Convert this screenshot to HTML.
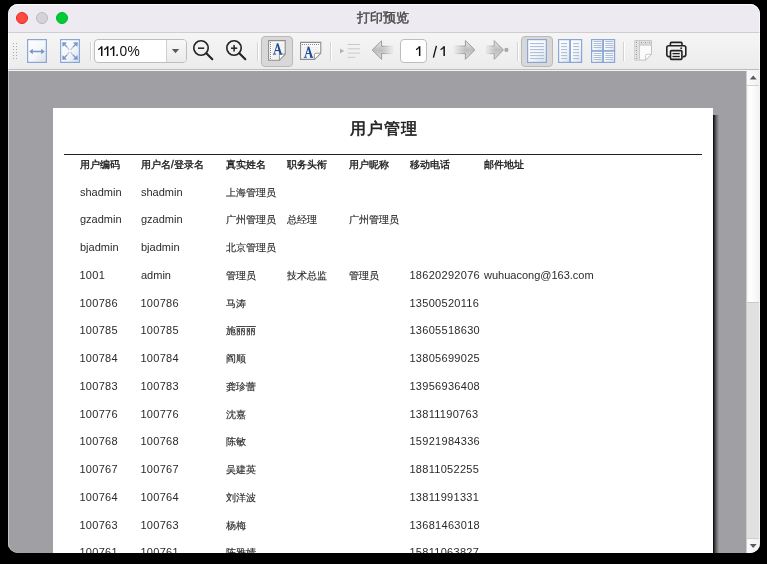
<!DOCTYPE html>
<html><head><meta charset="utf-8">
<style>
*{margin:0;padding:0;box-sizing:border-box}
html,body{width:767px;height:564px;background:#000;overflow:hidden;font-family:"Liberation Sans",sans-serif}
#win{position:absolute;left:8px;top:4px;width:752px;height:549px;border-radius:10px;overflow:hidden;background:#a09fa4;will-change:transform}
#title{position:absolute;left:0;top:0;width:752px;height:29px;background:#edeaf1;border-bottom:1px solid #cfcdd1}
#title .t{position:absolute;left:349px;top:5px;font-size:13px;font-weight:normal;-webkit-text-stroke:0.45px #4b4b4b;color:#4b4b4b;letter-spacing:0}
.light{position:absolute;top:8px;width:12px;height:12px;border-radius:50%}
#tb{position:absolute;left:0;top:29px;width:752px;height:37px;background:linear-gradient(#f5f5f5,#ececec);border-bottom:1px solid #bdbdbd;border-left:1px solid #fff}
#tbl{position:absolute;left:0;top:66px;width:752px;height:1px;background:#f4f4f4}
#content{position:absolute;left:0;top:67px;width:738px;height:482px;background:#a09fa4;overflow:hidden}
#page{position:absolute;left:45px;top:37px;width:660px;height:600px;background:#fff}
#shadow{position:absolute;left:705px;top:44px;width:6px;height:600px;background:linear-gradient(90deg,#000,#5a595c 45%,#a09fa4)}
#sb{position:absolute;left:738px;top:67px;width:14px;height:482px;background:#e2e2e2}
.row{position:absolute;left:0;height:0}
.h{position:absolute;top:0;line-height:14px;font-size:10px;font-weight:normal;-webkit-text-stroke:0.35px #1a1a1a;color:#1a1a1a;white-space:nowrap}
.c{position:absolute;top:0;font-size:11px;line-height:14px;color:#2a2a2a;white-space:nowrap}
.n{letter-spacing:0.3px;margin-left:-0.6px}
.z{position:absolute;top:1px;font-size:10px;line-height:14px;color:#2a2a2a;-webkit-text-stroke:0.15px #2a2a2a;white-space:nowrap}
</style></head><body>
<div id="win">
  <div id="title">
    <div class="light" style="left:8px;background:#ff4b43;border:1px solid #ef2418"></div>
    <div class="light" style="left:28px;background:#d5d3d9;border:1px solid #bab9be"></div>
    <div class="light" style="left:48px;background:#02cc33;border:1px solid #01b52b"></div>
    <div class="t">打印预览</div>
  </div>
  <div id="tb"></div>
  <div id="tbl"></div>
  <div id="content">
    <div style="position:absolute;left:0;top:0;width:1px;height:482px;background:#a8a7ac"></div>
    <div id="shadow"></div>
    <div id="page">
      <div style="position:absolute;left:0;width:660px;top:11px;text-align:center;font-size:16px;letter-spacing:1px;text-indent:1px;font-weight:normal;-webkit-text-stroke:0.6px #222;color:#222">用户管理</div>
      <div style="position:absolute;left:11px;top:46px;width:638px;height:1px;background:#222"></div>
<div class="row" style="top:50px"><div class="h" style="left:27px">用户编码</div><div class="h" style="left:88px">用户名/登录名</div><div class="h" style="left:173px">真实姓名</div><div class="h" style="left:234px">职务头衔</div><div class="h" style="left:296px">用户昵称</div><div class="h" style="left:357px">移动电话</div><div class="h" style="left:431px">邮件地址</div></div>
<div class="row" style="top:76.70px"><div class="c" style="left:27px">shadmin</div><div class="c" style="left:88px">shadmin</div><div class="z" style="left:173px">上海管理员</div></div>
<div class="row" style="top:104.44px"><div class="c" style="left:27px">gzadmin</div><div class="c" style="left:88px">gzadmin</div><div class="z" style="left:173px">广州管理员</div><div class="z" style="left:234px">总经理</div><div class="z" style="left:296px">广州管理员</div></div>
<div class="row" style="top:132.18px"><div class="c" style="left:27px">bjadmin</div><div class="c" style="left:88px">bjadmin</div><div class="z" style="left:173px">北京管理员</div></div>
<div class="row" style="top:159.92px"><div class="c n" style="left:27px">1001</div><div class="c" style="left:88px">admin</div><div class="z" style="left:173px">管理员</div><div class="z" style="left:234px">技术总监</div><div class="z" style="left:296px">管理员</div><div class="c n" style="left:357px">18620292076</div><div class="c" style="left:431px">wuhuacong@163.com</div></div>
<div class="row" style="top:187.66px"><div class="c n" style="left:27px">100786</div><div class="c n" style="left:88px">100786</div><div class="z" style="left:173px">马涛</div><div class="c n" style="left:357px">13500520116</div></div>
<div class="row" style="top:215.40px"><div class="c n" style="left:27px">100785</div><div class="c n" style="left:88px">100785</div><div class="z" style="left:173px">施丽丽</div><div class="c n" style="left:357px">13605518630</div></div>
<div class="row" style="top:243.14px"><div class="c n" style="left:27px">100784</div><div class="c n" style="left:88px">100784</div><div class="z" style="left:173px">阎顺</div><div class="c n" style="left:357px">13805699025</div></div>
<div class="row" style="top:270.88px"><div class="c n" style="left:27px">100783</div><div class="c n" style="left:88px">100783</div><div class="z" style="left:173px">龚珍蕾</div><div class="c n" style="left:357px">13956936408</div></div>
<div class="row" style="top:298.62px"><div class="c n" style="left:27px">100776</div><div class="c n" style="left:88px">100776</div><div class="z" style="left:173px">沈嘉</div><div class="c n" style="left:357px">13811190763</div></div>
<div class="row" style="top:326.36px"><div class="c n" style="left:27px">100768</div><div class="c n" style="left:88px">100768</div><div class="z" style="left:173px">陈敏</div><div class="c n" style="left:357px">15921984336</div></div>
<div class="row" style="top:354.10px"><div class="c n" style="left:27px">100767</div><div class="c n" style="left:88px">100767</div><div class="z" style="left:173px">吴建英</div><div class="c n" style="left:357px">18811052255</div></div>
<div class="row" style="top:381.84px"><div class="c n" style="left:27px">100764</div><div class="c n" style="left:88px">100764</div><div class="z" style="left:173px">刘洋波</div><div class="c n" style="left:357px">13811991331</div></div>
<div class="row" style="top:409.58px"><div class="c n" style="left:27px">100763</div><div class="c n" style="left:88px">100763</div><div class="z" style="left:173px">杨梅</div><div class="c n" style="left:357px">13681463018</div></div>
<div class="row" style="top:437.32px"><div class="c n" style="left:27px">100761</div><div class="c n" style="left:88px">100761</div><div class="z" style="left:173px">陈雅婧</div><div class="c n" style="left:357px">15811063827</div></div>

    </div>
  </div>
  <div id="sb">
    <div style="position:absolute;left:0;top:0;width:1px;height:482px;background:#cdcdcd"></div>
    <div style="position:absolute;left:1px;top:0;width:12px;height:14px;background:linear-gradient(90deg,#fbfbfb,#f1f1f1)"></div>
    <svg width="13" height="14" style="position:absolute;left:1px;top:0"><path d="M2.8 8.6 L6.2 4.6 L9.7 8.6 Z" fill="#5a5a5a"/></svg>
    <div style="position:absolute;left:1px;top:14px;width:12px;height:1px;background:#d2d2d2"></div>
    <div style="position:absolute;left:1px;top:15px;width:12px;height:216px;background:linear-gradient(90deg,#f6f6f6,#ffffff 30%,#f3f3f3)"></div>
    <div style="position:absolute;left:1px;top:231px;width:12px;height:1px;background:#c9c9c9"></div>
    <div style="position:absolute;left:1px;top:232px;width:12px;height:235px;background:#e1e1e1"></div>
    <div style="position:absolute;left:1px;top:467px;width:12px;height:1px;background:#cfcfcf"></div>
    <div style="position:absolute;left:1px;top:468px;width:12px;height:14px;background:linear-gradient(90deg,#fbfbfb,#f1f1f1)"></div>
    <svg width="13" height="14" style="position:absolute;left:1px;top:468px"><path d="M2.8 5.1 L9.7 5.1 L6.2 8.9 Z" fill="#5a5a5a"/></svg>
  </div>
</div>
<svg id="tbsvg" width="767" height="72" viewBox="0 0 767 72" style="position:absolute;left:0;top:0">
<defs>
<linearGradient id="pg" x1="0" y1="0" x2="1" y2="1"><stop offset="0" stop-color="#ffffff"/><stop offset="0.55" stop-color="#f4f6f9"/><stop offset="1" stop-color="#d9dee8"/></linearGradient>
<linearGradient id="btn" x1="0" y1="0" x2="0" y2="1"><stop offset="0" stop-color="#f8f8f8"/><stop offset="1" stop-color="#ebebeb"/></linearGradient>
<linearGradient id="arrL" x1="0" y1="0" x2="1" y2="0"><stop offset="0" stop-color="#c4c4c4"/><stop offset="0.55" stop-color="#cfcfcf"/><stop offset="1" stop-color="#f0f0f0" stop-opacity="0"/></linearGradient>
<linearGradient id="arrR" x1="1" y1="0" x2="0" y2="0"><stop offset="0" stop-color="#c4c4c4"/><stop offset="0.55" stop-color="#cfcfcf"/><stop offset="1" stop-color="#f0f0f0" stop-opacity="0"/></linearGradient>
<linearGradient id="shaftV" x1="0" y1="0" x2="0" y2="1"><stop offset="0" stop-color="#e6e6e6"/><stop offset="0.5" stop-color="#c2c2c2"/><stop offset="1" stop-color="#dadada"/></linearGradient>

<linearGradient id="mL" x1="0" y1="0" x2="1" y2="0"><stop offset="0" stop-color="#fff"/><stop offset="0.5" stop-color="#fff"/><stop offset="1" stop-color="#000"/></linearGradient>
<linearGradient id="mR" x1="1" y1="0" x2="0" y2="0"><stop offset="0" stop-color="#fff"/><stop offset="0.5" stop-color="#fff"/><stop offset="1" stop-color="#000"/></linearGradient>
<linearGradient id="af" x1="0" y1="0" x2="0" y2="1"><stop offset="0" stop-color="#ececec"/><stop offset="0.5" stop-color="#bdbdbd"/><stop offset="1" stop-color="#dcdcdc"/></linearGradient>
<mask id="mkB" maskUnits="userSpaceOnUse" x="370" y="38" width="24" height="24"><rect x="370" y="38" width="24" height="24" fill="url(#mL)"/></mask>
<mask id="mkF" maskUnits="userSpaceOnUse" x="453" y="38" width="24" height="24"><rect x="453" y="38" width="24" height="24" fill="url(#mR)"/></mask>
<mask id="mkL" maskUnits="userSpaceOnUse" x="485" y="38" width="20" height="24"><rect x="485" y="38" width="20" height="24" fill="url(#mR)"/></mask>
</defs>
<!-- grip -->
<g fill="#a8a8a8">
<rect x="13" y="43" width="1" height="1"/><rect x="16" y="43" width="1" height="1"/>
<rect x="13" y="46" width="1" height="1"/><rect x="16" y="46" width="1" height="1"/>
<rect x="13" y="49" width="1" height="1"/><rect x="16" y="49" width="1" height="1"/>
<rect x="13" y="52" width="1" height="1"/><rect x="16" y="52" width="1" height="1"/>
<rect x="13" y="55" width="1" height="1"/><rect x="16" y="55" width="1" height="1"/>
<rect x="13" y="58" width="1" height="1"/><rect x="16" y="58" width="1" height="1"/>
</g>
<!-- fit width -->
<rect x="27.6" y="39.6" width="18.8" height="22.8" fill="url(#pg)" stroke="#8aa7d6" stroke-width="1.2"/>
<line x1="31" y1="51.5" x2="43" y2="51.5" stroke="#7896c8" stroke-width="1.5"/>
<path d="M29.2 51.5 L32.8 48.8 L32.8 54.2 Z M44.8 51.5 L41.2 48.8 L41.2 54.2 Z" fill="#7896c8"/>
<!-- fit page -->
<rect x="60.6" y="39.6" width="18.8" height="22.8" fill="url(#pg)" stroke="#8aa7d6" stroke-width="1.2"/>
<g stroke="#7b98c9" stroke-width="1.3">
<line x1="64" y1="44" x2="67" y2="47"/><line x1="76" y1="44" x2="73" y2="47"/>
<line x1="64" y1="58" x2="67" y2="55"/><line x1="76" y1="58" x2="73" y2="55"/>
</g>
<g stroke="#9fb4d8" stroke-width="1.1" stroke-opacity="0.8">
<line x1="67" y1="47" x2="69.3" y2="49.8"/><line x1="73" y1="47" x2="70.7" y2="49.8"/>
<line x1="67" y1="55" x2="69.3" y2="52.2"/><line x1="73" y1="55" x2="70.7" y2="52.2"/>
</g>
<path d="M62.2 42.2 L67 42.6 L62.6 47 Z M77.8 42.2 L73 42.6 L77.4 47 Z M62.2 59.8 L67 59.4 L62.6 55 Z M77.8 59.8 L73 59.4 L77.4 55 Z" fill="#7896c8"/>
<!-- separators -->
<g fill="#d3d3d3"><rect x="90" y="42" width="1" height="19"/><rect x="257" y="42" width="1" height="19"/><rect x="330" y="42" width="1" height="19"/><rect x="517" y="42" width="1" height="19"/><rect x="623" y="42" width="1" height="19"/></g><g fill="#ffffff"><rect x="91" y="42" width="1" height="19"/><rect x="258" y="42" width="1" height="19"/><rect x="331" y="42" width="1" height="19"/><rect x="518" y="42" width="1" height="19"/><rect x="624" y="42" width="1" height="19"/></g>
<!-- combo -->
<rect x="94.5" y="39.5" width="92" height="23" rx="3.5" fill="#ffffff" stroke="#bdbdbd"/>
<path d="M166.5 40 H183 A3 3 0 0 1 186 43 V59 A3 3 0 0 1 183 62 H166.5 Z" fill="url(#btn)"/>
<line x1="166.5" y1="40" x2="166.5" y2="62" stroke="#cfcfcf"/>
<path d="M171.8 49 H179.2 L175.5 53.2 Z" fill="#5a5a5a"/>
<path transform="translate(0 0)" d="M101 46.3 H102.5 V56 H101 V48.3 Q99.8 49.7 98.1 50.3 V48.9 Q100.2 48 101 46.3 Z" fill="#111"/><path transform="translate(5.95 0)" d="M101 46.3 H102.5 V56 H101 V48.3 Q99.8 49.7 98.1 50.3 V48.9 Q100.2 48 101 46.3 Z" fill="#111"/><path transform="translate(11.9 0)" d="M101 46.3 H102.5 V56 H101 V48.3 Q99.8 49.7 98.1 50.3 V48.9 Q100.2 48 101 46.3 Z" fill="#111"/><rect x="116.3" y="54.4" width="1.6" height="1.6" fill="#111"/><text x="119.4 127.4" y="56" font-family="Liberation Sans" font-size="13.8" fill="#111">0%</text>
<!-- zoom out -->
<g stroke="#222" fill="none">
<circle cx="201" cy="48" r="7.2" stroke-width="1.6"/>
<line x1="198" y1="48.2" x2="204.2" y2="48.2" stroke-width="1.5"/>
<line x1="206.3" y1="53.3" x2="212.3" y2="59.2" stroke-width="2.1" stroke-linecap="round"/>
<circle cx="234" cy="48" r="7.2" stroke-width="1.6"/>
<line x1="231" y1="48.2" x2="237.2" y2="48.2" stroke-width="1.5"/>
<line x1="234.1" y1="45" x2="234.1" y2="51.4" stroke-width="1.5"/>
<line x1="239.3" y1="53.3" x2="245.3" y2="59.2" stroke-width="2.1" stroke-linecap="round"/>
</g>

<!-- pressed button portrait -->
<rect x="261.5" y="36.5" width="31" height="30" rx="3.5" fill="#d8d8d8" stroke="#b9b9b9"/>
<!-- portrait icon -->
<path d="M268.6 40.6 H285.2 V54 L279.4 60.2 H268.6 Z" fill="#fbfbfb" stroke="#8c8c8c" stroke-width="1.1"/>
<path d="M279.4 60.2 V55.5 Q279.4 54 281 54 H285.2 Z" fill="#ffffff" stroke="#8c8c8c" stroke-width="0.9"/>
<g fill="#e3e6e0"><rect x="272" y="43.6" width="12" height="0.7"/><rect x="272" y="45.6" width="12" height="0.7"/><rect x="272" y="47.6" width="12" height="0.7"/><rect x="272" y="49.6" width="12" height="0.7"/><rect x="272" y="51.6" width="12" height="0.7"/><rect x="272" y="53.6" width="7" height="0.7"/><rect x="272" y="55.6" width="7" height="0.7"/><rect x="272" y="57.6" width="7" height="0.7"/></g>
<g fill="#8a8a8a"><rect x="270" y="42" width="1" height="1"/><rect x="270" y="44" width="1" height="1"/><rect x="270" y="46" width="1" height="1"/><rect x="270" y="48" width="1" height="1"/><rect x="270" y="50" width="1" height="1"/><rect x="270" y="52" width="1" height="1"/><rect x="270" y="54" width="1" height="1"/><rect x="270" y="56" width="1" height="1"/><rect x="270" y="58" width="1" height="1"/></g>
<path d="M276.6 43.2 H278.3 L281.7 53.7 H279.4 Z M276.9 43.6 L277.5 45.1 L274.7 53.7 H273.9 Z M275.4 49.9 H279.8 L280.1 50.9 H275.1 Z" fill="#1c4a98"/><rect x="272.9" y="53.6" width="3.1" height="1" fill="#1c4a98"/><rect x="278.9" y="53.6" width="3.5" height="1" fill="#1c4a98"/>
<!-- landscape icon -->
<path d="M300.6 42.4 H320.8 V53.2 L314.4 59.4 H300.6 Z" fill="#fbfbfb" stroke="#8c8c8c" stroke-width="1.1"/>
<path d="M314.4 59.4 V54.8 Q314.4 53.2 316 53.2 H320.8 Z" fill="#ffffff" stroke="#8c8c8c" stroke-width="0.9"/>
<g fill="#e3e6e0"><rect x="302.5" y="47.5" width="16" height="0.7"/><rect x="302.5" y="49.5" width="16" height="0.7"/><rect x="302.5" y="51.5" width="16" height="0.7"/><rect x="302.5" y="53.5" width="11" height="0.7"/><rect x="302.5" y="55.5" width="11" height="0.7"/></g>
<g fill="#8a8a8a"><rect x="302" y="44" width="1" height="1"/><rect x="304" y="44" width="1" height="1"/><rect x="306" y="44" width="1" height="1"/><rect x="308" y="44" width="1" height="1"/><rect x="310" y="44" width="1" height="1"/><rect x="312" y="44" width="1" height="1"/><rect x="314" y="44" width="1" height="1"/><rect x="316" y="44" width="1" height="1"/><rect x="318" y="44" width="1" height="1"/></g>
<g transform="translate(30.9 3.2)"><path d="M276.6 43.2 H278.3 L281.7 53.7 H279.4 Z M276.9 43.6 L277.5 45.1 L274.7 53.7 H273.9 Z M275.4 49.9 H279.8 L280.1 50.9 H275.1 Z" fill="#1c4a98"/><rect x="272.9" y="53.6" width="3.1" height="1" fill="#1c4a98"/><rect x="278.9" y="53.6" width="3.5" height="1" fill="#1c4a98"/></g>
<!-- contents (disabled) -->
<path d="M340 48.6 L344.2 51.1 L340 53.6 Z" fill="#b4b4b4"/>
<g fill="#cacaca"><rect x="347.7" y="44" width="12.2" height="1"/><rect x="347.7" y="48.3" width="12.2" height="1"/><rect x="347.7" y="52.6" width="12.2" height="1"/><rect x="347.7" y="56.8" width="7.5" height="1"/></g>
<!-- back arrow -->
<g mask="url(#mkB)"><path d="M393 46.3 H381.6 V40.8 L372.2 50 L381.6 59.3 V53.6 H393 Z" fill="url(#af)" stroke="#9a9a9a" stroke-width="1"/></g>
<!-- page field -->
<rect x="400.5" y="39.5" width="26" height="23" rx="3.5" fill="#ffffff" stroke="#bdbdbd"/>
<path transform="translate(317.9 0)" d="M101 46.3 H102.5 V56 H101 V48.3 Q99.8 49.7 98.1 50.3 V48.9 Q100.2 48 101 46.3 Z" fill="#111"/>
<path d="M436.4 45.8 L433.4 57.6" stroke="#111" stroke-width="1.35"/><path transform="translate(342.4 0)" d="M101 46.3 H102.5 V56 H101 V48.3 Q99.8 49.7 98.1 50.3 V48.9 Q100.2 48 101 46.3 Z" fill="#111"/>
<!-- forward arrow -->
<g mask="url(#mkF)"><path d="M454 46.1 H465.4 V40.6 L474.8 49.9 L465.4 59.3 V53.6 H454 Z" fill="url(#af)" stroke="#9a9a9a" stroke-width="1"/></g>
<!-- last arrow -->
<g mask="url(#mkL)"><path d="M486.5 46.1 H494.2 V40.6 L503.4 49.9 L494.2 59.3 V53.6 H486.5 Z" fill="url(#af)" stroke="#9a9a9a" stroke-width="1"/></g>
<circle cx="506.4" cy="49.9" r="2.1" fill="#a8a8a8"/>
<!-- pressed button single -->
<rect x="521.5" y="36.5" width="31" height="30" rx="3.5" fill="#d8d8d8" stroke="#b9b9b9"/>
<rect x="527.6" y="39.6" width="18.8" height="22.8" fill="url(#pg)" stroke="#8aa7d6" stroke-width="1.2"/>
<g fill="#adc0de"><rect x="530" y="43" width="14" height="1.1"/><rect x="530" y="46" width="14" height="1.1"/><rect x="530" y="49" width="14" height="1.1"/><rect x="530" y="52" width="14" height="1.1"/><rect x="530" y="55" width="14" height="1.1"/><rect x="530" y="58" width="14" height="1.1"/></g>
<!-- facing -->
<rect x="558.6" y="39.6" width="11.2" height="22.8" fill="url(#pg)" stroke="#8aa7d6" stroke-width="1.2"/>
<rect x="570.4" y="39.6" width="11.2" height="22.8" fill="url(#pg)" stroke="#8aa7d6" stroke-width="1.2"/>
<g fill="#adc0de"><rect x="561" y="43" width="6" height="1.1"/><rect x="561" y="46" width="6" height="1.1"/><rect x="561" y="49" width="6" height="1.1"/><rect x="561" y="52" width="6" height="1.1"/><rect x="561" y="55" width="6" height="1.1"/><rect x="561" y="58" width="6" height="1.1"/>
<rect x="573" y="43" width="6" height="1.1"/><rect x="573" y="46" width="6" height="1.1"/><rect x="573" y="49" width="6" height="1.1"/><rect x="573" y="52" width="6" height="1.1"/><rect x="573" y="55" width="6" height="1.1"/><rect x="573" y="58" width="6" height="1.1"/></g>
<!-- grid -->
<rect x="591.6" y="39.6" width="11.2" height="11.2" fill="url(#pg)" stroke="#8aa7d6" stroke-width="1.2"/>
<rect x="603.4" y="39.6" width="11.2" height="11.2" fill="url(#pg)" stroke="#8aa7d6" stroke-width="1.2"/>
<rect x="591.6" y="51.2" width="11.2" height="11.2" fill="url(#pg)" stroke="#8aa7d6" stroke-width="1.2"/>
<rect x="603.4" y="51.2" width="11.2" height="11.2" fill="url(#pg)" stroke="#8aa7d6" stroke-width="1.2"/>
<g fill="#aebfdc"><rect x="593.5" y="41" width="8" height="1"/><rect x="593.5" y="43" width="8" height="1"/><rect x="593.5" y="45" width="8" height="1"/><rect x="593.5" y="47" width="8" height="1"/>
<rect x="605.3" y="41" width="8" height="1"/><rect x="605.3" y="43" width="8" height="1"/><rect x="605.3" y="45" width="8" height="1"/><rect x="605.3" y="47" width="8" height="1"/>
<rect x="593.5" y="53" width="8" height="1"/><rect x="593.5" y="55" width="8" height="1"/><rect x="593.5" y="57" width="8" height="1"/><rect x="593.5" y="59" width="8" height="1"/>
<rect x="605.3" y="53" width="8" height="1"/><rect x="605.3" y="55" width="8" height="1"/><rect x="605.3" y="57" width="8" height="1"/><rect x="605.3" y="59" width="8" height="1"/></g>
<!-- page setup -->
<path d="M634.8 40.6 H651.5 V54.3 L645.5 60.1 H634.8 Z" fill="#fbfbfb" stroke="#c2c2c2" stroke-width="1"/>
<rect x="635.3" y="41.1" width="3.8" height="18.5" fill="#e2e2e2"/>
<rect x="639.1" y="41.1" width="11.9" height="4.2" fill="#e0e0e0"/>
<rect x="639.1" y="44.6" width="11.9" height="0.9" fill="#c4c4c4"/>
<rect x="639" y="41.1" width="0.9" height="18.5" fill="#c4c4c4"/>
<path d="M645.5 60.1 V55.6 Q645.5 54.3 646.8 54.3 H651.5 Z" fill="#ffffff" stroke="#bcbcbc" stroke-width="0.8"/>
<g fill="#8c8c8c"><rect x="635.8" y="42" width="1.2" height="0.9"/><rect x="635.8" y="46" width="1.2" height="0.9"/><rect x="635.8" y="50" width="1.2" height="0.9"/><rect x="635.8" y="54" width="1.2" height="0.9"/><rect x="635.8" y="58" width="1.2" height="0.9"/>
<rect x="641" y="42" width="0.9" height="1.2"/><rect x="645" y="42" width="0.9" height="1.2"/><rect x="649" y="42" width="0.9" height="1.2"/></g>
<g fill="#b5b5b5"><rect x="636" y="44" width="0.9" height="0.8"/><rect x="636" y="48" width="0.9" height="0.8"/><rect x="636" y="52" width="0.9" height="0.8"/><rect x="636" y="56" width="0.9" height="0.8"/><rect x="643" y="42.2" width="0.8" height="0.9"/><rect x="647" y="42.2" width="0.8" height="0.9"/></g>
<!-- printer -->
<g fill="none" stroke="#222" stroke-width="1.6">
<path d="M670.4 45.2 V43.4 Q670.4 42.4 671.4 42.4 H681 Q682 42.4 682 43.4 V45.2"/>
<path d="M670 56.6 H668.8 Q666.8 56.6 666.8 54.6 V47.8 Q666.8 45.8 668.8 45.8 H683.8 Q685.8 45.8 685.8 47.8 V54.6 Q685.8 56.6 683.8 56.6 H682.5"/>
<rect x="670.5" y="50.6" width="11.4" height="8.8" rx="1"/>
</g>
<g stroke="#222" stroke-width="1.3"><line x1="672.5" y1="53.6" x2="679.8" y2="53.6"/><line x1="672.5" y1="56.5" x2="679.8" y2="56.5"/></g>
<circle cx="681.2" cy="48.2" r="0.9" fill="#222"/>
</svg>

<div style="position:absolute;left:8px;top:4px;width:752px;height:549px;border-radius:10px;box-shadow:inset 0 1px 0 rgba(255,255,255,0.75),inset -1px 0 0 rgba(255,255,255,0.55),inset 1px 0 0 rgba(255,255,255,0.3);pointer-events:none"></div>
</body></html>
